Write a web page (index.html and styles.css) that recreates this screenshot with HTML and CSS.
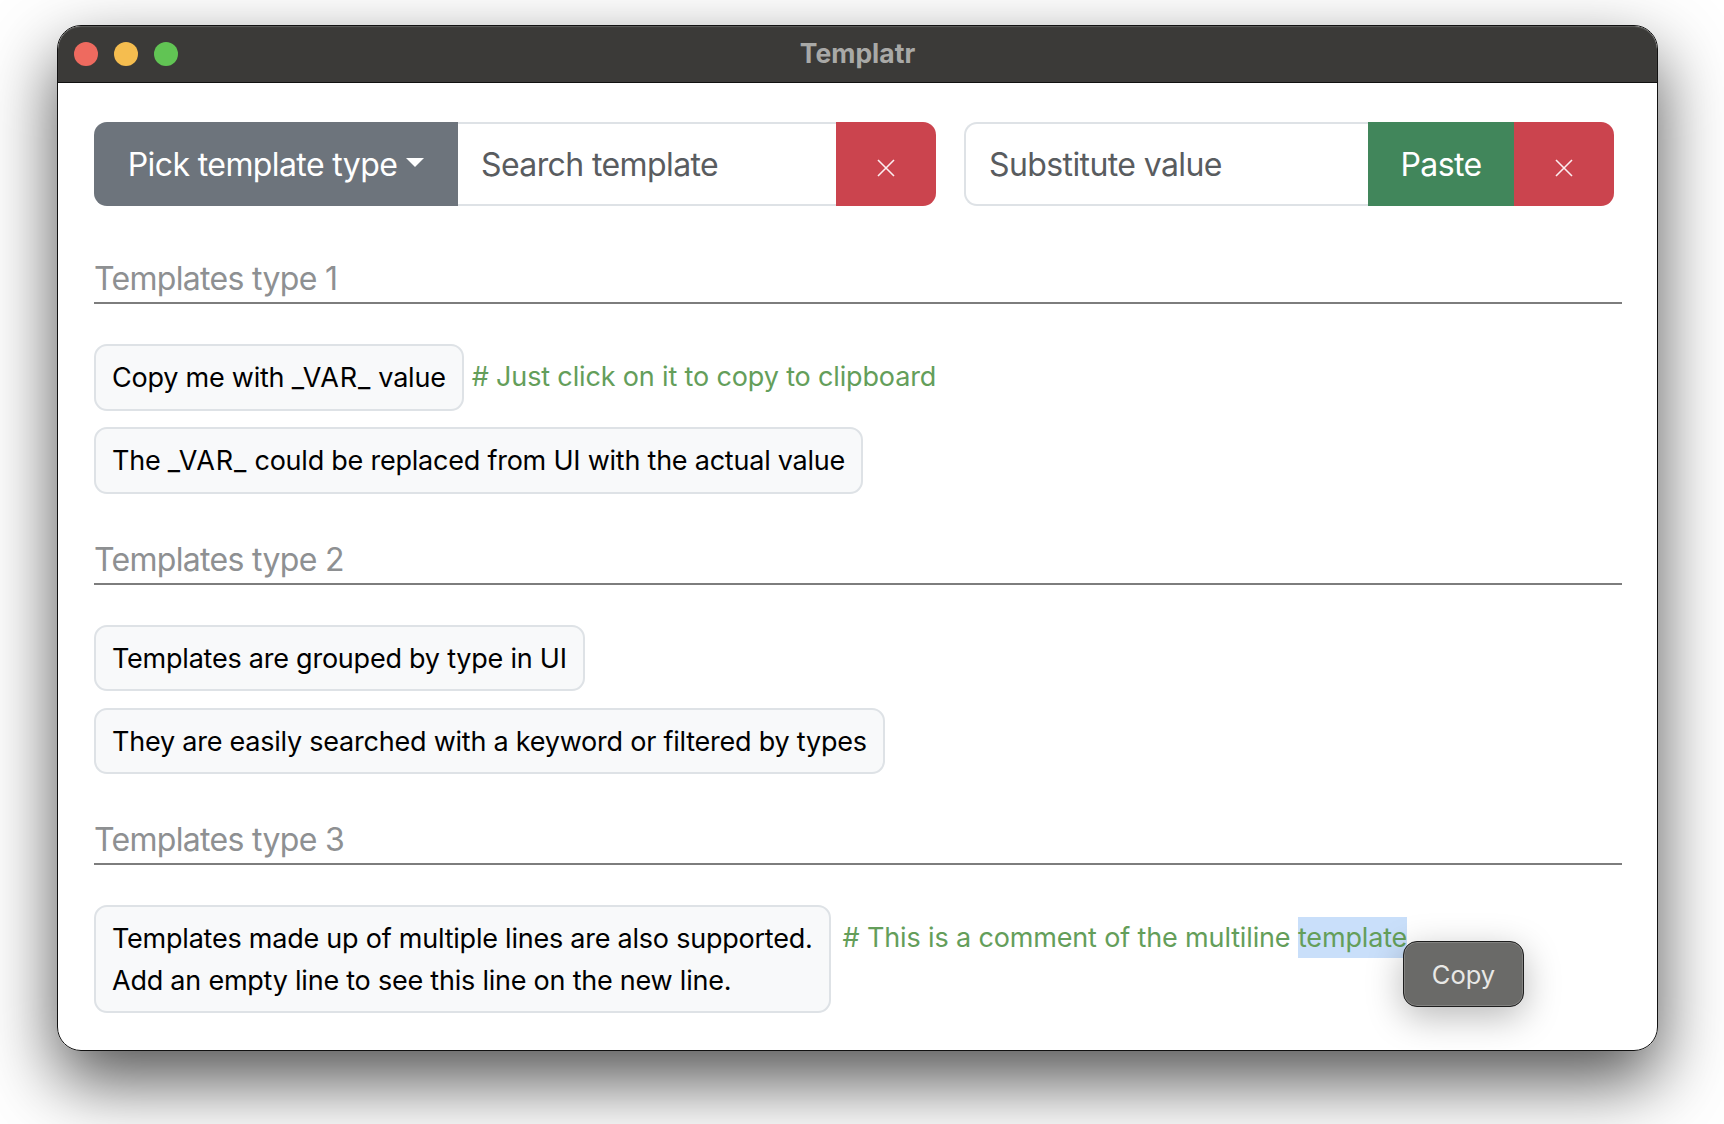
FILE: index.html
```html
<!DOCTYPE html>
<html lang="en">
<head>
  <meta charset="UTF-8">
  <meta name="viewport" content="width=device-width, initial-scale=1.0">
  <title>Templatr</title>
  <link rel="stylesheet" href="styles.css">
</head>
<body>
  <div class="window">
    <div class="titlebar">
      <div class="lights">
        <span class="light light-red"></span>
        <span class="light light-yellow"></span>
        <span class="light light-green"></span>
      </div>
      <div class="title">Templatr</div>
    </div>

    <div class="content">
      <div class="toolbar">
        <div class="group group-search">
          <button class="btn btn-pick">Pick template type<span class="caret"></span></button>
          <input class="field" type="text" placeholder="Search template">
          <button class="btn btn-clear" aria-label="Clear">
            <svg width="18" height="18" viewBox="0 0 18 18"><path d="M1 1L17 17M17 1L1 17" stroke="#fbeef0" stroke-width="1.6" fill="none"/></svg>
          </button>
        </div>
        <div class="group group-value">
          <input class="field field-first" type="text" placeholder="Substitute value">
          <button class="btn btn-paste">Paste</button>
          <button class="btn btn-clear" aria-label="Clear">
            <svg width="18" height="18" viewBox="0 0 18 18"><path d="M1 1L17 17M17 1L1 17" stroke="#fbeef0" stroke-width="1.6" fill="none"/></svg>
          </button>
        </div>
      </div>

      <section class="section">
        <h2 class="section-title">Templates type 1</h2>
        <div class="row">
          <div class="template">Copy me with <span class="var">_VAR_</span> value</div>
          <span class="comment"># Just click on it to copy to clipboard</span>
        </div>
        <div class="row">
          <div class="template">The <span class="var">_VAR_</span> could be replaced from UI with the actual value</div>
        </div>
      </section>

      <section class="section">
        <h2 class="section-title">Templates type 2</h2>
        <div class="row">
          <div class="template">Templates are grouped by type in UI</div>
        </div>
        <div class="row">
          <div class="template">They are easily searched with a keyword or filtered by types</div>
        </div>
      </section>

      <section class="section">
        <h2 class="section-title">Templates type 3</h2>
        <div class="row row-wide">
          <div class="template">Templates made up of multiple lines are also supported.<br>Add an empty line to see this line on the new line.</div>
          <span class="comment"># This is a comment of the multiline <span class="selected">template</span></span>
        </div>
      </section>
    </div>

    <div class="copy-popup">Copy</div>
  </div>
</body>
</html>
```

FILE: styles.css
```css
html, body {
  margin: 0;
  padding: 0;
  height: 100%;
  overflow: hidden;
  background: #fff;
  font-family: "Inter", "Liberation Sans", sans-serif;
}

body {
  padding: 25px 66px 0 57px;
  box-sizing: border-box;
}

.window {
  position: relative;
  height: 1026px;
  box-sizing: border-box;
  background: #fff;
  border: 1px solid #111;
  border-radius: 24px;
  overflow: hidden;
}

body::before {
  content: "";
  position: absolute;
  left: 57px;
  top: 25px;
  width: 1601px;
  height: 1026px;
  border-radius: 24px;
  box-shadow: 0 30px 70px rgba(0, 0, 0, 0.68);
}

.titlebar {
  height: 56px;
  background: #3b3a38;
  border-bottom: 1px solid #111;
  border-radius: 23px 23px 0 0;
  box-shadow: inset 0 1px 1px #5f5f5d;
  display: flex;
  align-items: center;
  justify-content: center;
  position: relative;
}

.lights {
  position: absolute;
  left: 16px;
  top: 16px;
  display: flex;
  gap: 16px;
}

.light {
  width: 24px;
  height: 24px;
  border-radius: 50%;
}

.light-red { background: #ee6a5f; }
.light-yellow { background: #f5bd4f; }
.light-green { background: #61c454; }

.title {
  font-size: 26.5px;
  font-weight: 700;
  color: #a9a9a7;
  margin-bottom: 3px;
}

.content {
  padding: 39px 35px 0 36px;
}

.toolbar {
  display: flex;
  gap: 28px;
  padding-right: 8px;
}

.group {
  display: flex;
  height: 84px;
}

.group-search { width: 842px; }
.group-value { width: 650px; }

.btn {
  border: none;
  padding: 0;
  font-family: inherit;
  font-size: 32px;
  letter-spacing: -0.6px;
  color: #fff;
  display: flex;
  align-items: center;
  justify-content: center;
  flex-shrink: 0;
}

.btn-pick {
  width: 364px;
  background: #6d747c;
  border-radius: 13px 0 0 13px;
}

.caret {
  width: 0;
  height: 0;
  margin-left: 9px;
  margin-bottom: 3px;
  border-top: 9px solid #fff;
  border-left: 9px solid transparent;
  border-right: 9px solid transparent;
}

.btn-paste {
  width: 146px;
  background: #41865b;
}

.btn-clear {
  width: 100px;
  background: #cb444e;
  border-radius: 0 13px 13px 0;
  padding-top: 7px;
}

.field {
  flex: 1;
  min-width: 0;
  box-sizing: border-box;
  border: 2px solid #dee2e6;
  border-left: none;
  border-right: none;
  padding: 0 24px 0 23px;
  font-family: inherit;
  font-size: 32px;
  letter-spacing: -0.6px;
  color: #212529;
  background: #fff;
  outline: none;
}

.field::placeholder {
  color: #595c5f;
  opacity: 1;
}

.field-first {
  border-left: 2px solid #dee2e6;
  border-radius: 13px 0 0 13px;
}

.section {
  margin-top: 47px;
}

.toolbar + .section {
  margin-top: 54px;
}

.section-title {
  margin: 0 0 40px;
  padding: 0 0 4px;
  font-size: 32px;
  letter-spacing: -0.68px;
  line-height: 38px;
  font-weight: 400;
  color: #8e9092;
  border-bottom: 2px solid #7d7d7d;
}

.row {
  display: flex;
  align-items: flex-start;
  gap: 8px;
  margin-bottom: 16.5px;
}

.row-wide {
  gap: 12px;
}

.section:last-child .row,
.section .row:last-child {
  margin-bottom: 0;
}

.template {
  padding: 11px 16px 10px;
  border: 2px solid #dee2e6;
  border-radius: 13px;
  background: #f8f9fa;
  font-size: 27px;
  letter-spacing: -0.23px;
  line-height: 41.5px;
  color: #000;
}

.var {
  letter-spacing: 0.8px;
}

.comment {
  padding-top: 12px;
  font-size: 27px;
  letter-spacing: -0.15px;
  line-height: 41.5px;
  color: #649e5a;
}

.selected {
  background: #c9dffa;
  padding: 4px 0;
}

.copy-popup {
  position: absolute;
  left: 1345px;
  top: 915px;
  width: 121px;
  height: 66px;
  box-sizing: border-box;
  display: flex;
  align-items: center;
  justify-content: center;
  background: #6a6a68;
  border: 1px solid #1e1e1e;
  box-shadow: inset 0 0 0 1px #838381, 0 10px 36px rgba(0, 0, 0, 0.28);
  border-radius: 14px;
  font-size: 25.5px;
  color: #e8e8e6;
}
```
